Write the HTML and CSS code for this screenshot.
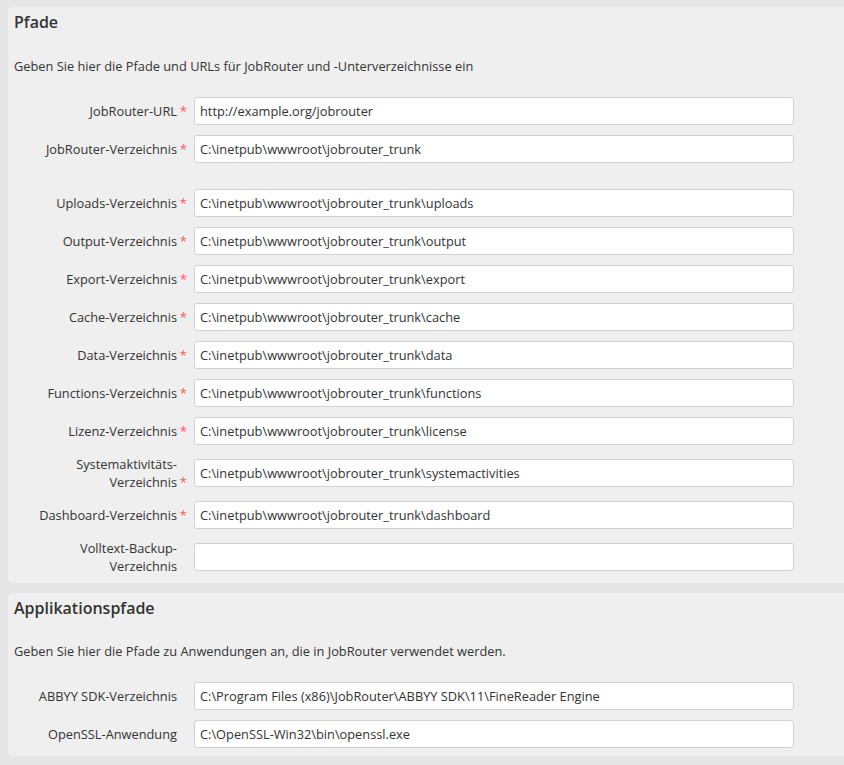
FILE: index.html
```html
<!DOCTYPE html>
<html lang="de">
<head>
<meta charset="utf-8">
<title>Pfade</title>
<link rel="stylesheet" href="styles.css">
</head>
<body>
<section class="panel">
  <h2 class="panel-title">Pfade</h2>
  <p class="panel-desc">Geben Sie hier die Pfade und URLs für JobRouter und -Unterverzeichnisse ein</p>
  <div class="form">
    <div class="label"><span class="text">JobRouter-URL</span><span class="req">*</span></div>
    <input class="field" type="text" value="http://example.org/jobrouter">
    <div class="label"><span class="text">JobRouter-Verzeichnis</span><span class="req">*</span></div>
    <input class="field" type="text" value="C:\inetpub\wwwroot\jobrouter_trunk">
    <div class="spacer"></div>
    <div class="label"><span class="text">Uploads-Verzeichnis</span><span class="req">*</span></div>
    <input class="field" type="text" value="C:\inetpub\wwwroot\jobrouter_trunk\uploads">
    <div class="label"><span class="text">Output-Verzeichnis</span><span class="req">*</span></div>
    <input class="field" type="text" value="C:\inetpub\wwwroot\jobrouter_trunk\output">
    <div class="label"><span class="text">Export-Verzeichnis</span><span class="req">*</span></div>
    <input class="field" type="text" value="C:\inetpub\wwwroot\jobrouter_trunk\export">
    <div class="label"><span class="text">Cache-Verzeichnis</span><span class="req">*</span></div>
    <input class="field" type="text" value="C:\inetpub\wwwroot\jobrouter_trunk\cache">
    <div class="label"><span class="text">Data-Verzeichnis</span><span class="req">*</span></div>
    <input class="field" type="text" value="C:\inetpub\wwwroot\jobrouter_trunk\data">
    <div class="label"><span class="text">Functions-Verzeichnis</span><span class="req">*</span></div>
    <input class="field" type="text" value="C:\inetpub\wwwroot\jobrouter_trunk\functions">
    <div class="label"><span class="text">Lizenz-Verzeichnis</span><span class="req">*</span></div>
    <input class="field" type="text" value="C:\inetpub\wwwroot\jobrouter_trunk\license">
    <div class="label"><span class="text">Systemaktivitäts-<br>Verzeichnis</span><span class="req">*</span></div>
    <input class="field" type="text" value="C:\inetpub\wwwroot\jobrouter_trunk\systemactivities">
    <div class="label"><span class="text">Dashboard-Verzeichnis</span><span class="req">*</span></div>
    <input class="field" type="text" value="C:\inetpub\wwwroot\jobrouter_trunk\dashboard">
    <div class="label"><span class="text">Volltext-Backup-<br>Verzeichnis</span><span class="req empty"></span></div>
    <input class="field" type="text" value="">
  </div>
</section>
<section class="panel panel-apps">
  <h2 class="panel-title">Applikationspfade</h2>
  <p class="panel-desc">Geben Sie hier die Pfade zu Anwendungen an, die in JobRouter verwendet werden.</p>
  <div class="form">
    <div class="label"><span class="text">ABBYY SDK-Verzeichnis</span><span class="req empty"></span></div>
    <input class="field" type="text" value="C:\Program Files (x86)\JobRouter\ABBYY SDK\11\FineReader Engine">
    <div class="label"><span class="text">OpenSSL-Anwendung</span><span class="req empty"></span></div>
    <input class="field" type="text" value="C:\OpenSSL-Win32\bin\openssl.exe">
  </div>
</section>
</body>
</html>
```
FILE: styles.css
```css
html, body {
  overflow: hidden;
}
body {
  margin: 0;
  padding: 7px 0 0 8px;
  background: #e6e6e6;
  font-family: "Open Sans", "Noto Sans", sans-serif;
  font-size: 12.8px;
  color: #333;
}
.panel {
  background: #efefef;
  border-radius: 4px;
  width: 860px;
  padding: 4px 0 8px 6px;
  margin-bottom: 10px;
  box-sizing: border-box;
}
.panel-title {
  margin: 0;
  font-size: 16px;
  font-weight: 600;
  line-height: 22px;
  color: #333;
}
.panel-desc {
  margin: 24px 0 22px 0;
  line-height: 18px;
}
.panel-apps .panel-desc {
  margin-top: 23px;
}
.form {
  display: grid;
  grid-template-columns: 173px 600px;
  column-gap: 7px;
  row-gap: 10px;
  align-items: center;
}
.spacer {
  grid-column: 1 / 3;
  height: 6px;
}
.label {
  display: flex;
  justify-content: flex-end;
  align-items: flex-end;
  text-align: right;
  line-height: 18px;
}
.req {
  display: inline-block;
  width: 10px;
  text-align: right;
  color: #f45b5b;
  font-size: 13px;
  line-height: 18px;
}
.field {
  box-sizing: border-box;
  width: 600px;
  height: 28px;
  margin: 0;
  padding: 0 5px;
  border: 1px solid #d2d2d2;
  border-radius: 3px;
  background: #fff;
  font-family: "Open Sans", "Noto Sans", sans-serif;
  font-size: 12.8px;
  color: #333;
  outline: none;
}
```
